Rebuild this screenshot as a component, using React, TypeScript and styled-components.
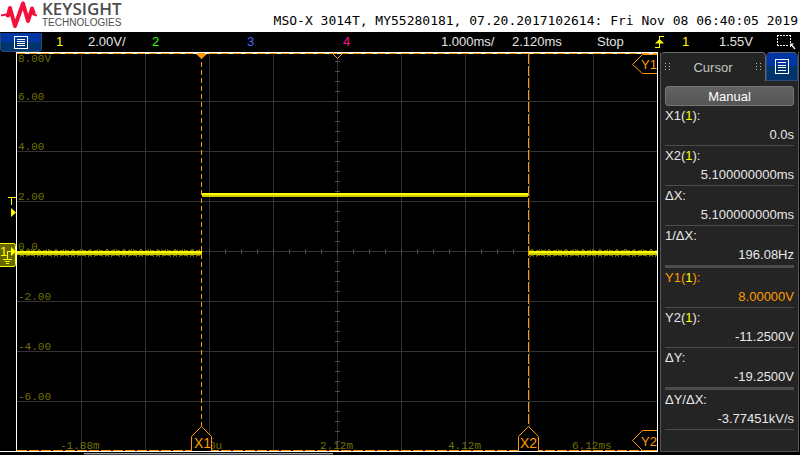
import React from "react";
import styled, { createGlobalStyle } from "styled-components";

const GlobalStyle = createGlobalStyle`
  * { box-sizing: border-box; }
  html, body { margin: 0; padding: 0; background: #000; }
  body { font-family: "Liberation Sans", Arial, sans-serif; font-size: 13px; color: #e4e4e4; }
`;

const ORANGE = "#ff9a00";
const YELLOW = "#ffff00";

const Screen = styled.div`
  display: flex;
  flex-direction: column;
  min-height: 100vh;
  background: #000;
  overflow: hidden;
`;

const Header = styled.header`
  display: flex;
  justify-content: space-between;
  height: 32px;
  background: #fff;
`;

const Brand = styled.div`
  display: flex;
  gap: 5px;
  padding-left: 1px;
`;

const BrandText = styled.div`
  display: flex;
  flex-direction: column;
  color: #4d4d4f;
`;

const BrandName = styled.span`
  font-family: "Open Sans", "Liberation Sans", sans-serif;
  font-size: 17px;
  font-weight: 600;
  line-height: 18px;
`;

const BrandSub = styled.span`
  font-size: 10px;
  line-height: 10px;
`;

const DeviceInfo = styled.div`
  align-self: flex-end;
  padding-right: 2px;
  font-family: "DejaVu Sans Mono", "Liberation Mono", monospace;
  font-size: 13px;
  line-height: 22px;
  color: #000;
  white-space: pre;
`;

const StatusBar = styled.div`
  display: grid;
  grid-template-columns: 56fr 32fr 64fr 95fr 96fr 98fr 71fr 85fr 58fr 27fr 37fr 58fr 23fr;
  align-items: center;
  height: 20px;
`;

const MenuButton = styled.button<{ $tall?: boolean }>`
  display: flex;
  align-items: center;
  justify-content: center;
  width: ${(p) => (p.$tall ? 32 : 42)}px;
  height: ${(p) => (p.$tall ? 29 : 19)}px;
  padding: 0;
  border: 1px solid #2b4a78;
  border-top-color: ${(p) => (p.$tall ? "#56657c" : "#0036a0")};
  border-radius: ${(p) => (p.$tall ? "5px 5px 0 0" : "0 0 4px 4px")};
  background: linear-gradient(#0036a4 50%, #00356b 50%);
`;

const Readout = styled.span<{ $color?: string }>`
  color: ${(p) => p.$color || "#e4e4e4"};
  line-height: 20px;
  white-space: nowrap;
`;

const IconCell = styled.span`
  display: flex;
`;

const Main = styled.main`
  display: grid;
  grid-template-columns: minmax(0, 1fr) 139px;
  flex: 1;
  align-items: start;
  padding-right: 1px;
`;

const Plot = styled.svg`
  display: block;
  width: 100%;
  height: auto;
`;

const AxisText = styled.text`
  font-family: "Liberation Mono", monospace;
  font-size: 11px;
  fill: #707000;
`;

const MarkText = styled.text<{ $color?: string; $large?: boolean }>`
  font-family: "Liberation Sans", Arial, sans-serif;
  font-size: ${(p) => (p.$large ? 14 : 13)}px;
  fill: ${(p) => p.$color || ORANGE};
`;

const Panel = styled.aside`
  display: flex;
  flex-direction: column;
  padding-bottom: 21px;
  border: 1px solid #555;
  border-top: 0;
  background: #242424;
`;

const TabRow = styled.div`
  display: flex;
  justify-content: space-between;
  height: 29px;
  background: #000;
`;

const Tab = styled.div`
  display: flex;
  flex: 1;
  align-items: center;
  justify-content: space-between;
  padding: 0 4px;
  border-top: 1px solid #666;
  border-right: 1px solid #666;
  border-radius: 4px 4px 0 0;
  background: #242424;
  color: #c4c4c4;
`;

const ModeButton = styled.button`
  height: 20px;
  margin: 5px 4px 0;
  padding: 0;
  border: 1px solid #757575;
  border-radius: 3px;
  background: linear-gradient(#626262, #555);
  color: #fff;
  font-family: "Liberation Sans", Arial, sans-serif;
  font-size: 13px;
  line-height: 20px;
`;

const List = styled.dl`
  display: flex;
  flex-direction: column;
  margin: 0;
  padding: 0 4px;
`;

const Measure = styled.div<{ $active?: boolean; $group?: boolean }>`
  color: ${(p) => (p.$active ? ORANGE : "#e8e8e8")};
  border-bottom: ${(p) => (p.$group ? 3 : 1)}px solid #4c4c4c;
`;

const Name = styled.dt`
  line-height: 19px;
`;

const Value = styled.dd`
  margin: 0;
  line-height: 20px;
  text-align: right;
`;

const Channel = styled.span`
  color: ${YELLOW};
`;

const KeysightLogo = () => (
  <svg width="36" height="31" viewBox="0 0 36 31" fill="none" stroke="#f5103c" strokeLinejoin="round" aria-hidden="true">
    <path d="M0 15.500L5 14.500L7 17M31 12L32.500 14.500L36 15.500" strokeWidth="2" />
    <path d="M6.500 17L9 8L14 26L22 3.500L27 21L31 8.500L33 14" strokeWidth="4" />
  </svg>
);

const ListIcon = ({ tall }: { tall?: boolean }) => {
  const h = tall ? 15 : 13;
  const lines = tall ? [3, 6, 8, 11] : [3, 5, 7, 9];
  return (
    <svg width="14" height={h} viewBox={`0 0 14 ${h}`} fill="none" stroke="#fff" shapeRendering="crispEdges" aria-hidden="true">
      <path d={`M.5 .5h13v${h - 1}H.5z` + lines.map((y) => `M3 ${y}.5h8`).join("")} />
    </svg>
  );
};

const EdgeIcon = () => (
  <svg width="10" height="12" viewBox="0 0 10 12" aria-hidden="true">
    <path d="M0 11.500H4.500V.5H9" fill="none" stroke={YELLOW} shapeRendering="crispEdges" />
    <path d="M4.500 3L9 7.500H0z" fill={YELLOW} />
  </svg>
);

const SelectIcon = () => (
  <svg width="19" height="16" viewBox="0 0 19 16" aria-hidden="true">
    <path d="M0 1.500H14M0 11.500H12M.5 1V12M13.500 1V9" fill="none" stroke="#eee" strokeDasharray="2 1" shapeRendering="crispEdges" />
    <path d="M13 9.500h4l-1.500 1.500 3 3.500-1 1-3-3.500-1.500 1.500z" fill="#eee" />
  </svg>
);

const Grip = () => (
  <svg width="5" height="8" viewBox="0 0 5 8" fill="#bbb" shapeRendering="crispEdges" aria-hidden="true">
    {[0, 3, 6].map((y) => (
      <path key={y} d={`M0 ${y}h1v1h-1zM4 ${y}h1v1h-1z`} />
    ))}
  </svg>
);

const verticals = [81, 145, 209, 273, 337, 401, 465, 529, 593];
const horizontals = [101, 151, 201, 251, 301, 351, 401];
const axis: [string, number, number][] = [
  ["8.00V", 18, 62],
  ["6.00", 18, 100],
  ["4.00", 18, 150],
  ["2.00", 18, 200],
  ["0.0", 18, 250],
  ["-2.00", 18, 300],
  ["-4.00", 18, 350],
  ["-6.00", 18, 400],
  ["-1.88m", 60, 449],
  ["0u", 209, 449],
  ["2.12m", 320, 449],
  ["4.12m", 448, 449],
  ["6.12ms", 572, 449],
];

const grid = [
  ...verticals.map((x) => `M${x}.5 54V450`),
  ...horizontals.map((y) => `M17 ${y}.5H657`),
].join("");

const ticks = [
  ...Array.from({ length: 39 }, (_, i) => `M335 ${61 + i * 10}.5h5`),
  ...Array.from({ length: 39 }, (_, i) => `M${33 + i * 16}.5 249v5`),
].join("");

const noise = (from: number, to: number) => {
  let d = "";
  for (let x = from; x < to; x += 1) {
    const n = (x * 37 + x * x * 11) % 17;
    if (n < 9) d += `M${x}.5 ${n % 2 ? 249 : 250}V${n % 3 ? 256 : 257}`;
  }
  return d;
};

const Waveform = () => (
  <Plot viewBox="0 52 660 403" role="img" aria-label="Channel 1 waveform">
    <g fill="none" shapeRendering="crispEdges">
      <path d={grid} stroke="#333" />
      <path d={ticks} stroke="#484848" />
      <path d="M84 453.500H333" stroke="#999" />
      <path d="M84 454.500H333" stroke="#444" />
    </g>
    {axis.map(([label, x, y]) => (
      <AxisText key={label} x={x} y={y}>{label}</AxisText>
    ))}
    <g fill="none" shapeRendering="crispEdges">
      <path d={noise(18, 200) + noise(530, 657)} stroke="#666600" />
      <path d="M17 252H202M528 252H657M202 194H528" stroke="#ffff00" strokeWidth="2" />
      <path d="M17 254H202M528 254H657M202 196H528" stroke="#cccc00" strokeWidth="2" />
      <path d="M16.500 52V452M657.500 52V452M16 52.500H658M0 451.500H658" stroke="#fff" />
      <path d="M17 53.500H657" stroke="#fff" />
      <path d="M17 53.500H657" stroke={ORANGE} strokeDasharray="8 4" />
      <path d="M17 450.500H657" stroke={ORANGE} strokeDasharray="10 2" />
      <path d="M201.500 54V427" stroke={ORANGE} strokeDasharray="5 3" />
      <path d="M528.500 54V427" stroke={ORANGE} strokeDasharray="10 2" />
    </g>
    <path d="M196 54h11l-5.500 5z" fill={ORANGE} />
    <path d="M333 54l4.500 4.500 4.500-4.500" fill="#000" stroke={ORANGE} />
    <g fill="#000" stroke={ORANGE}>
      <path d="M191.500 451V436.500L201.500 426.500L211.500 436.500V451" />
      <path d="M518.500 451V436.500L528.500 426.500L538.500 436.500V451" />
      <path d="M657 54.500H642.500L632.500 64.500L642.500 73.500H657" />
      <path d="M657 430.500H642.500L632.500 440.500L642.500 450.500H657" />
    </g>
    <MarkText $large x="194" y="448">X1</MarkText>
    <MarkText $large x="520" y="448">X2</MarkText>
    <MarkText x="641" y="69">Y1</MarkText>
    <MarkText x="641" y="446">Y2</MarkText>
    <path d="M8 197.500h8M11.500 197v8" stroke={YELLOW} fill="none" shapeRendering="crispEdges" />
    <path d="M11 208l5 4.500-5 4.500z" fill={YELLOW} />
    <rect x="-3" y="243.500" width="18.500" height="23" rx="2" fill="#666600" stroke={YELLOW} />
    <MarkText $color={YELLOW} x="0" y="256">1</MarkText>
    <path d="M7.500 259v-7.500H11M3 259.500h9M5 261.500h5M6 263.500h3" stroke={YELLOW} fill="none" shapeRendering="crispEdges" />
    <path d="M11 247l5 4.500-5 4.500z" fill={YELLOW} />
  </Plot>
);

type Row = { name: React.ReactNode; value: string; active?: boolean; group?: boolean };

const rows: Row[] = [
  { name: <>X1(<Channel>1</Channel>):</>, value: "0.0s" },
  { name: <>X2(<Channel>1</Channel>):</>, value: "5.100000000ms" },
  { name: "ΔX:", value: "5.100000000ms" },
  { name: "1/ΔX:", value: "196.08Hz", group: true },
  { name: <>Y1(<Channel>1</Channel>):</>, value: "8.00000V", active: true },
  { name: <>Y2(<Channel>1</Channel>):</>, value: "-11.2500V" },
  { name: "ΔY:", value: "-19.2500V", group: true },
  { name: "ΔY/ΔX:", value: "-3.77451kV/s" },
];

export default function App() {
  return (
    <Screen>
      <GlobalStyle />
      <Header>
        <Brand>
          <KeysightLogo />
          <BrandText>
            <BrandName>KEYSIGHT</BrandName>
            <BrandSub>TECHNOLOGIES</BrandSub>
          </BrandText>
        </Brand>
        <DeviceInfo>MSO-X 3014T, MY55280181, 07.20.2017102614: Fri Nov 08 06:40:05 2019</DeviceInfo>
      </Header>
      <StatusBar>
        <MenuButton aria-label="Main menu"><ListIcon /></MenuButton>
        <Readout $color={YELLOW}>1</Readout>
        <Readout>2.00V/</Readout>
        <Readout $color="#33ff00">2</Readout>
        <Readout $color="#4466ff">3</Readout>
        <Readout $color="#ff1493">4</Readout>
        <Readout>1.000ms/</Readout>
        <Readout>2.120ms</Readout>
        <Readout>Stop</Readout>
        <IconCell><EdgeIcon /></IconCell>
        <Readout $color={YELLOW}>1</Readout>
        <Readout>1.55V</Readout>
        <IconCell><SelectIcon /></IconCell>
      </StatusBar>
      <Main>
        <Waveform />
        <Panel>
          <TabRow>
            <Tab><Grip />Cursor<Grip /></Tab>
            <MenuButton $tall aria-label="Cursor menu"><ListIcon tall /></MenuButton>
          </TabRow>
          <ModeButton>Manual</ModeButton>
          <List>
            {rows.map((row, i) => (
              <Measure key={i} $active={row.active} $group={row.group}>
                <Name>{row.name}</Name>
                <Value>{row.value}</Value>
              </Measure>
            ))}
          </List>
        </Panel>
      </Main>
    </Screen>
  );
}
